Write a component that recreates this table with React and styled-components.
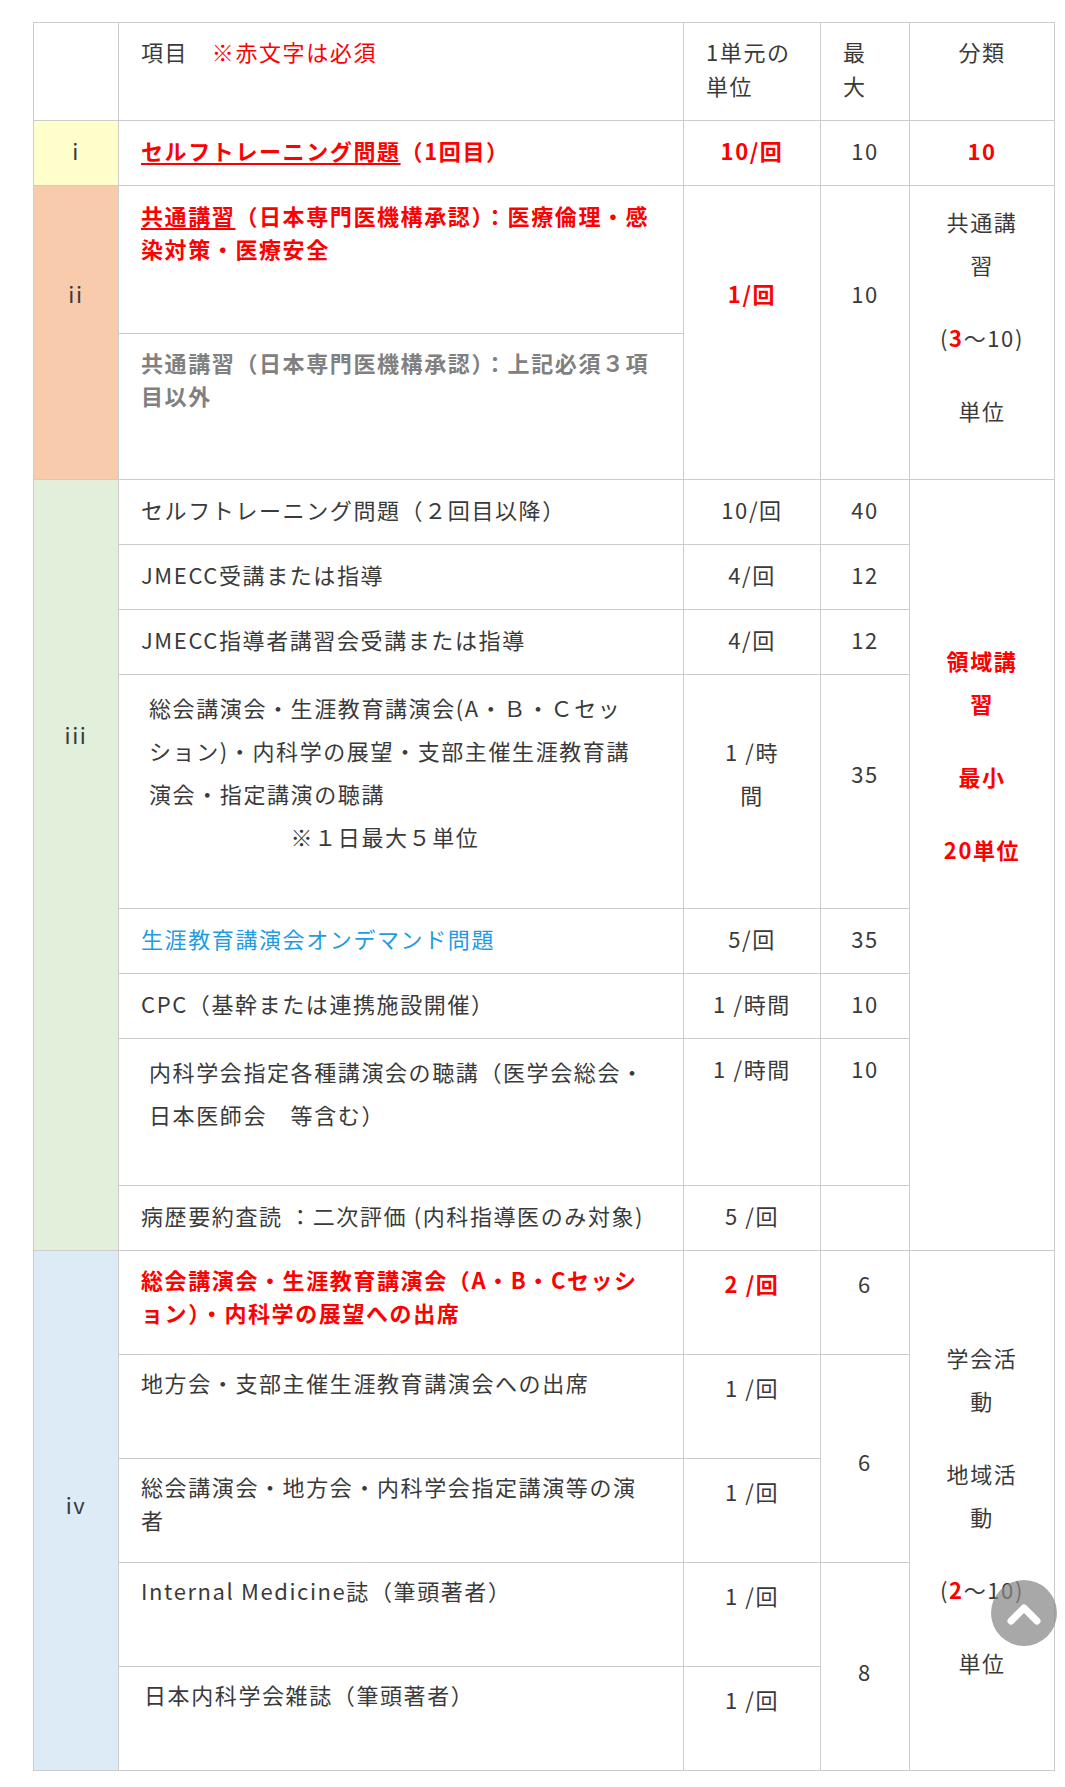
import React from 'react';
import styled, { createGlobalStyle } from 'styled-components';

const GlobalStyle = createGlobalStyle`
  html, body { margin: 0; padding: 0; background: #ffffff; }
  body { font-family: "Noto Sans CJK JP", "Noto Sans", sans-serif; color: #3a3a3a; }
`;

const Page = styled.div`
  padding: 22px 11px 8px 33px;
`;

const Table = styled.table`
  width: 1021px;
  table-layout: fixed;
  border-collapse: collapse;
  font-size: 22px;
  letter-spacing: 1.6px;
  color: #3a3a3a;
`;

const Col = styled.col`
  width: ${(p) => p.$w}px;
`;

const Row = styled.tr`
  height: ${(p) => p.$h}px;
`;

const Cell = styled.td`
  border: 1px solid #cccccc;
  padding: ${(p) => p.$pt ?? 11}px 22px ${(p) => p.$pb ?? 0}px ${(p) => p.$pl ?? 22}px;
  vertical-align: ${(p) => p.$va || 'top'};
  text-align: ${(p) => p.$align || 'left'};
  line-height: ${(p) => p.$lh ?? 36}px;
  background: ${(p) => p.$bg || '#ffffff'};
  white-space: nowrap;
`;

const Red = styled.span`
  color: #ff0000;
  font-weight: 700;
`;

const RedNote = styled.span`
  color: #ff0000;
`;

const Under = styled.span`
  text-decoration: underline;
  text-decoration-thickness: 2px;
  text-underline-offset: 3px;
`;

const Muted = styled.span`
  color: #808080;
  font-weight: 700;
`;

const Blue = styled.span`
  color: #1f9be3;
`;

const Category = styled.div`
  display: flex;
  flex-direction: column;
  align-items: center;
  gap: 30px;
  line-height: 43px;
  color: ${(p) => (p.$red ? '#ff0000' : 'inherit')};
  font-weight: ${(p) => (p.$red ? 700 : 400)};
`;

const CatItem = styled.div``;

const ScrollTop = styled.button`
  position: fixed;
  right: 8px;
  bottom: 141px;
  width: 66px;
  height: 66px;
  padding: 0;
  border: none;
  border-radius: 50%;
  background: rgba(135, 135, 135, 0.72);
  display: flex;
  align-items: center;
  justify-content: center;
  cursor: pointer;
`;

const GREEN = '#e2efda';
const PEACH = '#f8cbad';
const YELLOW = '#ffffcc';
const BLUE = '#ddebf7';

const NOTE_INDENT = '\u3000\u3000\u3000\u3000\u3000\u3000';

export default function App() {
  return (
    <>
      <GlobalStyle />
      <Page>
        <Table>
          <colgroup>
            <Col $w={85} />
            <Col $w={565} />
            <Col $w={137} />
            <Col $w={89} />
            <Col $w={145} />
          </colgroup>
          <tbody>
            <Row $h={98}>
              <Cell />
              <Cell $lh={34}>
                {'項目\u3000'}
                <RedNote>※赤文字は必須</RedNote>
              </Cell>
              <Cell $lh={34}>
                1単元の
                <br />
                単位
              </Cell>
              <Cell $lh={34}>
                最
                <br />
                大
              </Cell>
              <Cell $lh={34} $align="center">
                分類
              </Cell>
            </Row>

            <Row $h={65}>
              <Cell $bg={YELLOW} $align="center">
                i
              </Cell>
              <Cell>
                <Red>
                  <Under>セルフトレーニング問題</Under>（1回目）
                </Red>
              </Cell>
              <Cell $align="center">
                <Red>10/回</Red>
              </Cell>
              <Cell $align="center">10</Cell>
              <Cell $align="center">
                <Red>10</Red>
              </Cell>
            </Row>

            <Row $h={148}>
              <Cell rowSpan={2} $bg={PEACH} $align="center" $pt={89}>
                ii
              </Cell>
              <Cell $lh={33} $pt={13}>
                <Red>
                  <Under>共通講習</Under>（日本専門医機構承認）：医療倫理・感
                  <br />
                  染対策・医療安全
                </Red>
              </Cell>
              <Cell rowSpan={2} $align="center" $pt={89}>
                <Red>1/回</Red>
              </Cell>
              <Cell rowSpan={2} $align="center" $pt={89}>
                10
              </Cell>
              <Cell rowSpan={2} $align="center" $pt={14}>
                <Category>
                  <CatItem>
                    共通講
                    <br />
                    習
                  </CatItem>
                  <CatItem>
                    (<Red>3</Red>～10)
                  </CatItem>
                  <CatItem>単位</CatItem>
                </Category>
              </Cell>
            </Row>
            <Row $h={146}>
              <Cell $lh={33} $pt={12}>
                <Muted>
                  共通講習（日本専門医機構承認）：上記必須３項
                  <br />
                  目以外
                </Muted>
              </Cell>
            </Row>

            <Row $h={65}>
              <Cell rowSpan={8} $bg={GREEN} $align="center" $pt={236}>
                iii
              </Cell>
              <Cell>セルフトレーニング問題（２回目以降）</Cell>
              <Cell $align="center">10/回</Cell>
              <Cell $align="center">40</Cell>
              <Cell rowSpan={8} $align="center" $pt={159}>
                <Category $red>
                  <CatItem>
                    領域講
                    <br />
                    習
                  </CatItem>
                  <CatItem>最小</CatItem>
                  <CatItem>20単位</CatItem>
                </Category>
              </Cell>
            </Row>
            <Row $h={65}>
              <Cell>JMECC受講または指導</Cell>
              <Cell $align="center">4/回</Cell>
              <Cell $align="center">12</Cell>
            </Row>
            <Row $h={65}>
              <Cell>JMECC指導者講習会受講または指導</Cell>
              <Cell $align="center">4/回</Cell>
              <Cell $align="center">12</Cell>
            </Row>
            <Row $h={234}>
              <Cell $lh={43} $pl={30}>
                総会講演会・生涯教育講演会(A・Ｂ・Ｃセッ
                <br />
                ション)・内科学の展望・支部主催生涯教育講
                <br />
                演会・指定講演の聴講
                <br />
                {NOTE_INDENT + '※１日最大５単位'}
              </Cell>
              <Cell $align="center" $lh={43} $pt={55}>
                1 /時
                <br />
                間
              </Cell>
              <Cell $align="center" $pt={80}>
                35
              </Cell>
            </Row>
            <Row $h={65}>
              <Cell>
                <Blue>生涯教育講演会オンデマンド問題</Blue>
              </Cell>
              <Cell $align="center">5/回</Cell>
              <Cell $align="center">35</Cell>
            </Row>
            <Row $h={65}>
              <Cell>CPC（基幹または連携施設開催）</Cell>
              <Cell $align="center">1 /時間</Cell>
              <Cell $align="center">10</Cell>
            </Row>
            <Row $h={147}>
              <Cell $lh={43} $pl={30}>
                内科学会指定各種講演会の聴講（医学会総会・
                <br />
                {'日本医師会\u3000等含む）'}
              </Cell>
              <Cell $align="center">1 /時間</Cell>
              <Cell $align="center">10</Cell>
            </Row>
            <Row $h={65}>
              <Cell>病歴要約査読 ：二次評価 (内科指導医のみ対象)</Cell>
              <Cell $align="center">5 /回</Cell>
              <Cell $align="center" />
            </Row>

            <Row $h={104}>
              <Cell rowSpan={5} $bg={BLUE} $align="center" $va="middle" $pt={0} $pb={14}>
                iv
              </Cell>
              <Cell $lh={33} $pt={12}>
                <Red>
                  総会講演会・生涯教育講演会（A・B・Cセッシ
                  <br />
                  ョン）・内科学の展望への出席
                </Red>
              </Cell>
              <Cell $align="center" $lh={43}>
                <Red>2 /回</Red>
              </Cell>
              <Cell $align="center" $lh={43}>
                6
              </Cell>
              <Cell rowSpan={5} $align="center" $va="middle" $pt={0} $pb={2}>
                <Category>
                  <CatItem>
                    学会活
                    <br />
                    動
                  </CatItem>
                  <CatItem>
                    地域活
                    <br />
                    動
                  </CatItem>
                  <CatItem>
                    (<Red>2</Red>～10)
                  </CatItem>
                  <CatItem>単位</CatItem>
                </Category>
              </Cell>
            </Row>
            <Row $h={104}>
              <Cell $lh={33}>地方会・支部主催生涯教育講演会への出席</Cell>
              <Cell $align="center" $lh={43}>
                1 /回
              </Cell>
              <Cell rowSpan={2} $align="center" $va="middle" $pt={4}>
                6
              </Cell>
            </Row>
            <Row $h={104}>
              <Cell $lh={33}>
                総会講演会・地方会・内科学会指定講演等の演
                <br />
                者
              </Cell>
              <Cell $align="center" $lh={43}>
                1 /回
              </Cell>
            </Row>
            <Row $h={104}>
              <Cell $lh={33}>Internal Medicine誌（筆頭著者）</Cell>
              <Cell $align="center" $lh={43}>
                1 /回
              </Cell>
              <Cell rowSpan={2} $align="center" $va="middle" $pt={8}>
                8
              </Cell>
            </Row>
            <Row $h={104}>
              <Cell $lh={33} $pl={25}>
                日本内科学会雑誌（筆頭著者）
              </Cell>
              <Cell $align="center" $lh={43}>
                1 /回
              </Cell>
            </Row>
          </tbody>
        </Table>
      </Page>
      <ScrollTop aria-label="ページトップへ">
        <svg width="36" height="24" viewBox="0 0 36 24" aria-hidden="true">
          <polyline
            points="5,20 18,7 31,20"
            fill="none"
            stroke="#ffffff"
            strokeWidth="7"
            strokeLinecap="round"
            strokeLinejoin="round"
          />
        </svg>
      </ScrollTop>
    </>
  );
}
